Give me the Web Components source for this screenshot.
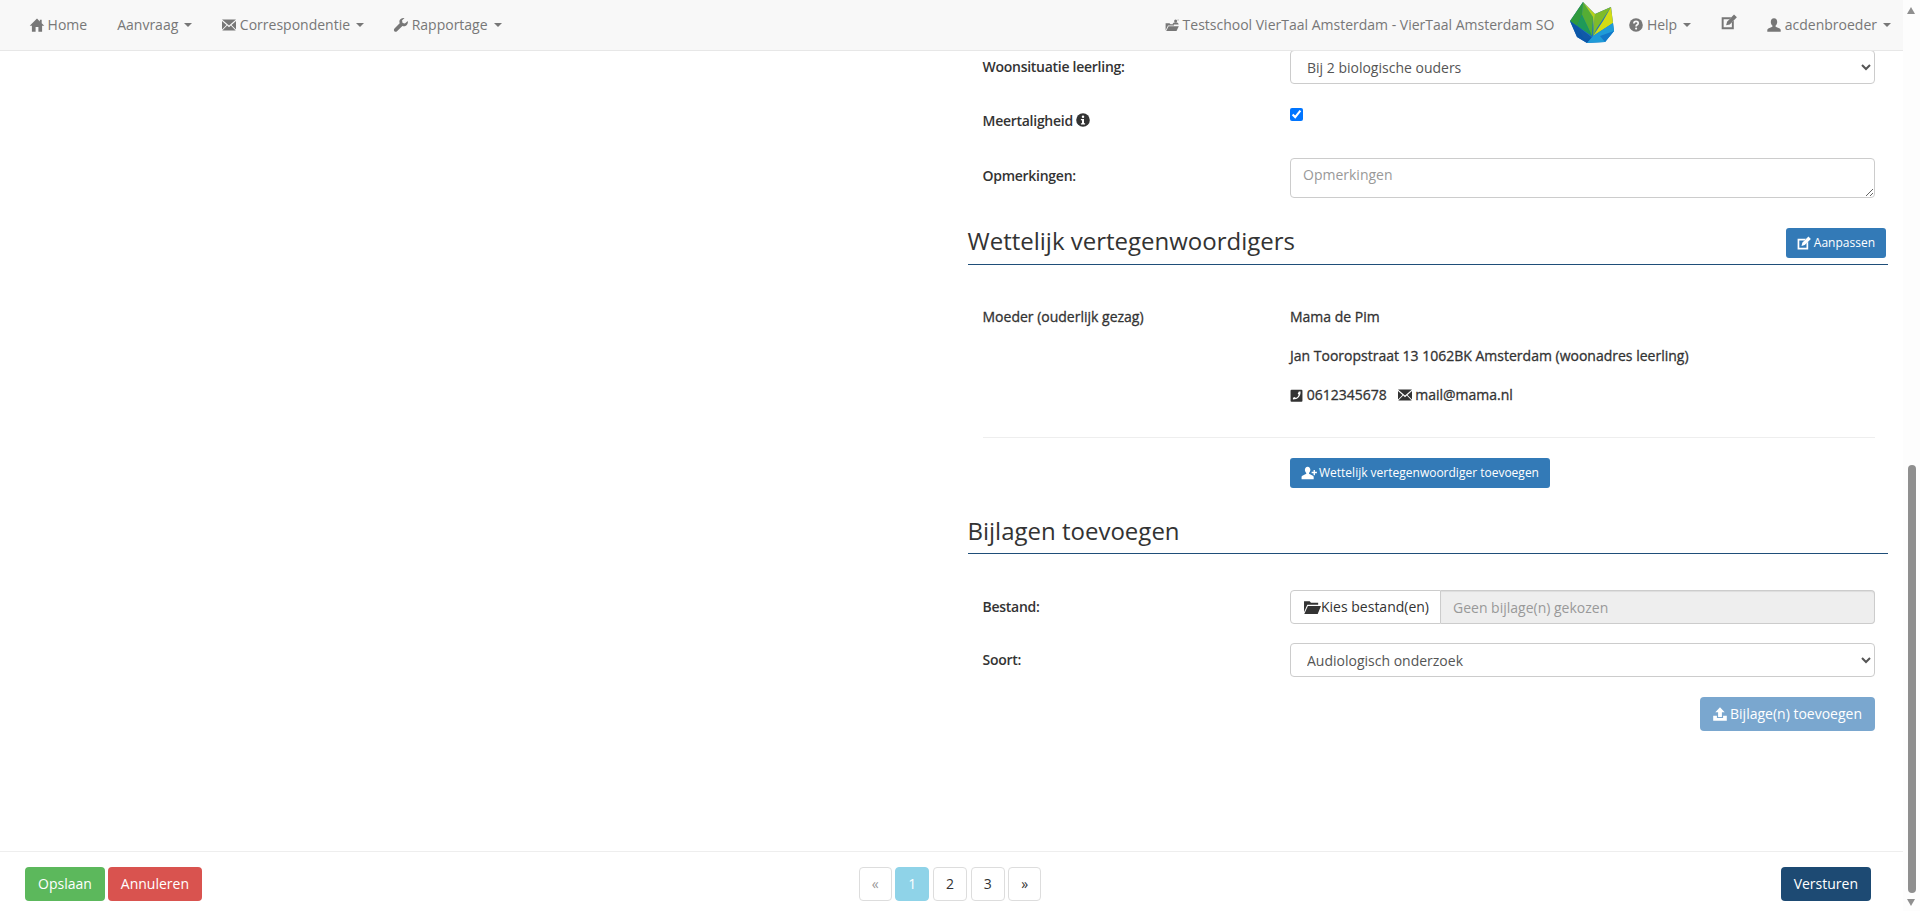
<!DOCTYPE html>
<html lang="nl"><head><meta charset="utf-8"><title>Aanvraag</title>
<style>
html,body{margin:0;height:911px;overflow:hidden;background:#fff}
body{font:14px/20px "Open Sans","Liberation Sans",sans-serif;color:#333}
</style></head><body>
<app-shell>
  <app-navbar slot="nav"></app-navbar>
  <page-form slot="main"></page-form>
  <app-footer slot="foot"></app-footer>
</app-shell>
<script>
const ICONS={
home:'<path d="M7 .6-.3 7.700h2.200V13.800h3.700V9h2.800v4.800h3.700V7.700h2.200l-2.600-2.500V1.800h-1.900v1.600z"/>',
envelope:'<path d="M0 1.400h14L7 7.400zM0 2.900v8.500l4.500-4.500zM14 2.900v8.500L9.500 6.900zM.3 12.500h13.400L8.800 7.600 7 9.200 5.200 7.600z"/>',
wrench:'<path d="M13.800 3l-2.900 2.500-2.300-.6-.6-2.300L10.500.1C8.600-.5 6.300.5 5.600 2.300c-.4 1-.3 2.100.1 3L.5 10.600c-.8.9-.8 1.900-.1 2.700s1.800.7 2.600-.1l5.400-5.200c.9.4 2 .5 3 .1 1.800-.8 2.900-3 2.400-5.100z"/>',
school:'<path d="M.6 5.200h3.900l1 1H9v1.300H3L.6 12.500z"/><path d="M3.600 8.300H13.800L11.500 13H1.200z"/><circle cx="10.600" cy="2.900" r="1.500"/><path d="M7.500 6.400c.3-1.500 1.400-2.200 3.100-2.200 1.600 0 2.800.7 3.100 2.200z"/><path d="M12.300 1.700h1.600v.6h-1.600z"/>',
help:'<circle cx="7" cy="7" r="6.800"/><path d="M4.900 5.400c0-1.300 1-2.100 2.200-2.100s2.100.8 2.100 1.900c0 1.600-2.100 1.500-2.100 3.200" fill="none" stroke="var(--cut,#f8f8f8)" stroke-width="1.700"/><circle cx="7.100" cy="10.600" r="1.050" fill="var(--cut,#f8f8f8)"/>',
info:'<circle cx="7" cy="7" r="6.800"/><circle cx="7" cy="3.700" r="1.250" fill="var(--cut,#fff)"/><path d="M4.900 5.900h3.100v4.300h1.100v1.300H4.900v-1.300H6V7.200H4.900z" fill="var(--cut,#fff)"/>',
edit:'<path d="M.6 2.800h8.400L7.300 4.500H2.300v7.200h7.200V7.300L11.200 5.600v7.800H.6z"/><path d="M11.400.4 13.900 2.900 7.700 9.100 4.500 9.900l.8-3.200z"/>',
user:'<path d="M7 .3C4.900.3 3.800 2 3.800 4c0 1.500.6 2.900 1.600 3.600v1.100L1.300 10.600c-.7.3-1 .9-1 1.500v1.700h13.400v-1.700c0-.6-.3-1.200-1-1.500L8.600 8.700V7.600c1-.7 1.600-2.100 1.600-3.600C10.200 2 9.100.3 7 .3z"/>',
phone:'<rect x=".6" y=".8" width="12.800" height="12.800" rx="1"/><path d="M9.500 2.600h1.900c.2 4.900-2.800 8.500-8.200 8.700l-.1-2 2.300-.6.700 1c1.700-.7 2.900-2.200 3.200-3.900l-1-.6z" fill="var(--cut,#fff)"/>',
folder:'<path d="M.8 2.500h4.400l1 1.100h5.600v1.600H3.300L.8 11z"/><path d="M3.800 6.200H14l-2.600 6.300H1z"/>',
upload:'<path d="M7 .3 11.700 5.300H8.900V9.900H5.100V5.300H2.300z"/><path d="M.2 8.800h3.700v2.300h6.200V8.800h3.700v4.900H.2z"/>',
useradd:'<path d="M5.800 1.500C4.300 1.500 3.400 2.700 3.400 4.200c0 1.100.5 2.100 1.200 2.700v.8L1.200 9.400C.7 9.600.5 10.100.5 10.500v1.900h10.600v-1.900c0-.4-.2-.9-.7-1.100L7 7.700v-.8c.7-.6 1.200-1.600 1.200-2.700C8.200 2.700 7.300 1.500 5.800 1.500z"/><path d="M11 4.300h1.200v1.700h1.700v1.200h-1.700v1.700H11V7.200H9.300V6H11z"/>'
};
const reg=(n,c)=>customElements.define(n,c);
const tpl=(el,html)=>{el.attachShadow({mode:'open'}).innerHTML=html;return el.shadowRoot};

reg('x-icon',class extends HTMLElement{connectedCallback(){
 const s=this.getAttribute('size')||14;
 tpl(this,`<style>:host{display:inline-block;width:${s}px;height:${s}px;line-height:0;vertical-align:-2px}svg{width:100%;height:100%;fill:currentColor;display:block;overflow:visible}</style><svg viewBox="0 0 14 14" aria-hidden="true">${ICONS[this.getAttribute('name')]}</svg>`);
}});

reg('nav-link',class extends HTMLElement{connectedCallback(){
 const icon=this.getAttribute('icon'),caret=this.hasAttribute('caret'),only=!this.textContent.trim();
 tpl(this,`<style>:host{display:flex;align-items:center;height:50px;padding:0 var(--pr,15px) 0 15px;color:#777;white-space:nowrap}
 x-icon{margin-right:${only?0:3.6}px}
 .c{display:inline-block;width:0;height:0;margin-left:6px;border-top:4px solid;border-left:4px solid transparent;border-right:4px solid transparent}</style>
 ${icon?`<x-icon name="${icon}" size="${this.getAttribute('isize')||14}"></x-icon>`:''}<span><slot></slot></span>${caret?'<i class="c"></i>':''}`);
}});

reg('app-logo',class extends HTMLElement{connectedCallback(){
 tpl(this,`<style>:host{display:block;width:44px;height:44px;margin:2px 0 0 1px}svg{display:block;width:44px;height:44px}</style>
 <svg viewBox="0 0 44 44" role="img" aria-label="logo">
 <polygon points="13,0 25,12 41,5 44,29 35,40 17,41 7,35 0,19" fill="#1b6fc2"/>
 <polygon points="13,0 0,19 7,24 12,13" fill="#2f9a3d"/>
 <polygon points="13,0 12,13 22,34 23,15" fill="#54ad34"/>
 <polygon points="13,0 25,12 24,30 23,15" fill="#b4d21c"/>
 <polygon points="25,12 41,5 27,26 23,34" fill="#7fbb2a"/>
 <polygon points="41,5 43,21 23,34 33,19" fill="#d2dc14"/>
 <polygon points="12,13 22,34 7,24" fill="#1e9a58"/>
 <polygon points="0,19 7,24 22,36 17,41 7,35" fill="#0b57a8"/>
 <polygon points="7,24 22,36 14,37" fill="#1159a8"/>
 <polygon points="23,34 43,21 44,29 35,40 17,41" fill="#1f9bd8"/>
 <polygon points="35,40 44,29 30,34" fill="#1278c8"/>
 </svg>`);
}});

reg('app-navbar',class extends HTMLElement{connectedCallback(){
 tpl(this,`<style>:host{display:flex;justify-content:space-between;height:50px;background:#f8f8f8;border-bottom:1px solid #e7e7e7;padding:0 0 0 15px;position:relative;z-index:1}
 .g{display:flex;align-items:flex-start}</style>
 <div class="g"><nav-link icon="home">Home</nav-link><nav-link caret>Aanvraag</nav-link><nav-link icon="envelope" caret>Correspondentie</nav-link><nav-link icon="wrench" caret>Rapportage</nav-link></div>
 <div class="g"><nav-link icon="school">Testschool VierTaal Amsterdam - VierTaal Amsterdam SO</nav-link><app-logo></app-logo><nav-link icon="help" caret>Help</nav-link><nav-link icon="edit" isize="16" style="margin-top:-3px"></nav-link><nav-link icon="user" caret style="--pr:12px">acdenbroeder</nav-link></div>`);
}});

reg('app-btn',class extends HTMLElement{connectedCallback(){
 const k=this.getAttribute('kind')||'primary',sm=this.hasAttribute('small');
 const c={primary:'#337ab7',success:'#5cb85c',danger:'#d9534f',navy:'#1d4a73',muted:'#7aa7cf'}[k];
 const isize=this.getAttribute('isize')||14;
 tpl(this,`<style>:host{display:inline-flex;align-items:center;justify-content:center;box-sizing:border-box;height:${sm?30:34}px;padding:0 ${sm?11:13}px;background:${c};color:#fff;border-radius:${sm?3:4}px;font-size:${sm?12:14}px;white-space:nowrap;--cut:${c}}
 x-icon{margin-right:${isize>14?2:3}px}</style>${this.getAttribute('icon')?`<x-icon name="${this.getAttribute('icon')}" size="${isize}"></x-icon>`:''}<slot></slot>`);
}});

reg('form-row',class extends HTMLElement{connectedCallback(){
 tpl(this,`<style>:host{display:grid;grid-template-columns:307.500px 1fr;padding:0 15px}
 .l{font-weight:600;letter-spacing:-.27px;color:#333;align-self:var(--la,center);padding-top:var(--lp,0)}</style><div class="l"><slot name="label"></slot></div><div><slot></slot></div>`);
}});

reg('section-title',class extends HTMLElement{connectedCallback(){
 tpl(this,`<style>:host{display:flex;justify-content:space-between;align-items:flex-end;height:var(--h,40px);border-bottom:1px solid #1f4e79;padding:0 2px 6px 0;margin-right:2px;box-sizing:content-box}
 h2{margin:0;font-size:24px;line-height:33px;font-weight:400;color:#333;position:relative;top:var(--ht,-1px)}</style><h2><slot></slot></h2><slot name="action"></slot>`);
}});

reg('x-select',class extends HTMLElement{connectedCallback(){
 tpl(this,`<style>:host{display:block}select{display:block;width:100%;height:34px;box-sizing:border-box;padding:6px 12px;border:1px solid #ccc;border-radius:4px;background:#fff;color:#555;font:14px/20px "Open Sans",sans-serif}</style><select><option>${this.getAttribute('value')}</option></select>`);
}});

reg('page-form',class extends HTMLElement{connectedCallback(){
 tpl(this,`<style>:host{display:grid;grid-template-columns:952.500px 1fr;height:100%}
 .col{grid-column:2;padding:0 13px 0 15px;margin-top:-1px}
 .r2{margin-top:24px;height:26px}
 .r3{margin-top:24px;--la:start;--lp:8px}
 input[type=checkbox]{display:block;width:13px;height:13px;margin:0}
 textarea{display:block;width:100%;height:40px;box-sizing:border-box;padding:6px 12px;border:1px solid #ccc;border-radius:4px;font:14px/20px "Open Sans",sans-serif;color:#555;resize:vertical}
 textarea::placeholder,input::placeholder{color:#999;opacity:1}
 .s1{margin-top:20px;--h:40px}
 .p{margin-top:42px;--la:start}
 .m{font-weight:500;letter-spacing:0;-webkit-text-stroke:.3px currentColor}
 .vals{font-weight:500;-webkit-text-stroke:.3px currentColor}
 .vals div{height:20px;margin-bottom:19px}
 hr{border:0;border-top:1px solid #eee;margin:13px 15px 0}
 .add{margin-top:20px;padding-left:322.500px;display:block}
 .s2{margin-top:17px;--h:42px;--ht:0px}
 .f{margin-top:36px}
 .fi{display:flex;height:34px}
 .kies{display:flex;align-items:center;box-sizing:border-box;width:151px;border:1px solid #ccc;border-radius:4px 0 0 4px;background:#fff;padding-left:12px;color:#333;white-space:nowrap}
 .fi input{flex:1;min-width:0;box-sizing:border-box;border:1px solid #ccc;border-left:0;border-radius:0 4px 4px 0;background:#eee;padding:6px 12px;font:14px "Open Sans",sans-serif;box-shadow:inset 0 1px 1px rgba(0,0,0,.075)}
 .sr{margin-top:19px}
 .up{margin:20px 15px 0;display:flex;justify-content:flex-end}
 </style>
 <div class="col">
  <form-row><span slot="label">Woonsituatie leerling:</span><x-select value="Bij 2 biologische ouders"></x-select></form-row>
  <form-row class="r2"><span slot="label">Meertaligheid <x-icon name="info" style="vertical-align:-1px"></x-icon></span><input type="checkbox" checked></form-row>
  <form-row class="r3"><span slot="label">Opmerkingen:</span><textarea placeholder="Opmerkingen"></textarea></form-row>
  <section-title class="s1">Wettelijk vertegenwoordigers<app-btn slot="action" small icon="edit">Aanpassen</app-btn></section-title>
  <form-row class="p"><span slot="label" class="m">Moeder (ouderlijk gezag)</span>
   <div class="vals"><div>Mama de Pim</div><div>Jan Tooropstraat 13 1062BK Amsterdam (woonadres leerling)</div><div><x-icon name="phone" size="13"></x-icon> 0612345678 &nbsp; <x-icon name="envelope"></x-icon> mail@mama.nl</div></div></form-row>
  <hr>
  <div class="add"><app-btn small icon="useradd" isize="16">Wettelijk vertegenwoordiger toevoegen</app-btn></div>
  <section-title class="s2">Bijlagen toevoegen</section-title>
  <form-row class="f"><span slot="label">Bestand:</span><div class="fi"><div class="kies"><x-icon name="folder" size="18"></x-icon>Kies bestand(en)</div><input disabled placeholder="Geen bijlage(n) gekozen"></div></form-row>
  <form-row class="sr"><span slot="label">Soort:</span><x-select value="Audiologisch onderzoek"></x-select></form-row>
  <div class="up"><app-btn kind="muted" icon="upload">Bijlage(n) toevoegen</app-btn></div>
 </div>`);
}});

reg('page-item',class extends HTMLElement{connectedCallback(){
 const a=this.hasAttribute('active'),d=this.hasAttribute('disabled');
 tpl(this,`<style>:host{display:flex;align-items:center;justify-content:center;box-sizing:border-box;height:34px;min-width:33px;padding:0 12px;border:1px solid ${a?'#8fd3e8':'#ddd'};border-radius:4px;background:${a?'#8fd3e8':'#fff'};color:${a?'#fff':d?'#999':'#333'}}</style><slot></slot>`);
}});

reg('app-footer',class extends HTMLElement{connectedCallback(){
 tpl(this,`<style>:host{display:grid;grid-template-columns:1fr auto 1fr;align-items:start;height:60px;box-sizing:border-box;border-top:1px solid #eee;padding:15px 28px 0 25px}
 .l{display:flex;gap:3px}.c{display:flex;gap:3.640px}.r{display:flex;justify-content:flex-end;padding-right:4px}</style>
 <div class="l"><app-btn kind="success">Opslaan</app-btn><app-btn kind="danger">Annuleren</app-btn></div>
 <div class="c"><page-item disabled>«</page-item><page-item active>1</page-item><page-item>2</page-item><page-item>3</page-item><page-item>»</page-item></div>
 <div class="r"><app-btn kind="navy">Versturen</app-btn></div>`);
}});

reg('app-scrollbar',class extends HTMLElement{connectedCallback(){
 tpl(this,`<style>:host{display:block;width:17px;height:911px;background:#fdfdfd;position:relative}
 .up,.dn{position:absolute;left:4px;width:0;height:0;border-left:4.500px solid transparent;border-right:4.500px solid transparent}
 .up{top:7px;border-bottom:7px solid #8f8f8f}.dn{bottom:5px;border-top:7px solid #8f8f8f}
 .t{position:absolute;left:5px;width:8px;top:465px;bottom:18px;background:#8f8f8f;border-radius:4px}</style><i class="up"></i><i class="t"></i><i class="dn"></i>`);
}});

reg('app-shell',class extends HTMLElement{connectedCallback(){
 tpl(this,`<style>:host{display:flex;height:911px}.m{flex:1;min-width:0;display:flex;flex-direction:column}.b{flex:1;min-height:0}</style>
 <div class="m"><slot name="nav"></slot><div class="b"><slot name="main"></slot></div><slot name="foot"></slot></div><app-scrollbar></app-scrollbar>`);
}});
</script></body></html>
